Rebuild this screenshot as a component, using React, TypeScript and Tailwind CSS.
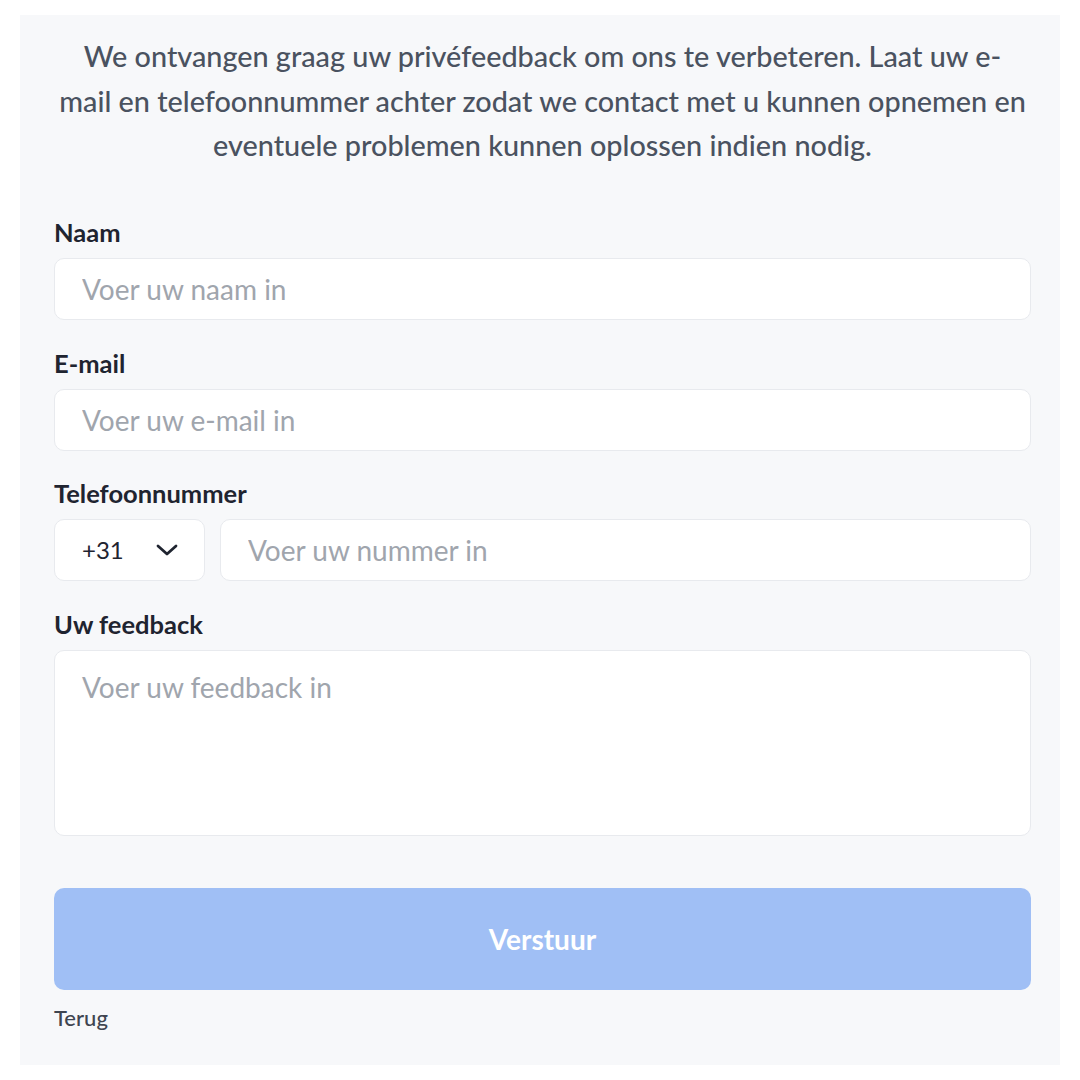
const font = { fontFamily: "Lato, 'Noto Sans', sans-serif" };

function Label({ children }: { children: string }) {
  return (
    <label className="mb-[13px] block text-[25.5px] font-bold leading-[26px] text-[#1f2430]">
      {children}
    </label>
  );
}

const field =
  "block h-[62px] w-full rounded-[10px] border border-[#e8eaee] bg-white px-[27px] text-[28px] text-[#1f2430] outline-none placeholder:text-[#a0a5ad]";

export default function App() {
  return (
    <div className="min-h-[1080px] bg-white pt-[15px]" style={font}>
      <div className="mx-[20px] h-[1050px] bg-[#f7f8fa] pl-[34px] pr-[29px] pt-[19px]">
        <p className="text-center text-[28.8px] font-medium leading-[44.5px] text-[#4a5260]">
          We ontvangen graag uw privéfeedback om ons te verbeteren. Laat uw e-
          <br />
          mail en telefoonnummer achter zodat we contact met u kunnen opnemen en
          <br />
          eventuele problemen kunnen oplossen indien nodig.
        </p>

        <form className="mt-[51px]" onSubmit={(e) => e.preventDefault()}>
          <Label>Naam</Label>
          <input className={field} placeholder="Voer uw naam in" />

          <div className="mt-[30px]">
            <Label>E-mail</Label>
            <input className={field} placeholder="Voer uw e-mail in" />
          </div>

          <div className="mt-[29px]">
            <Label>Telefoonnummer</Label>
            <div className="flex gap-[15px]">
              <button
                type="button"
                className="flex h-[62px] w-[151px] shrink-0 items-center justify-between rounded-[10px] border border-[#e8eaee] bg-white pl-[27px] pr-[26px] text-[24px] text-[#1f2430]"
              >
                <span>+31</span>
                <svg width="22" height="12" viewBox="0 0 22 12" fill="none" aria-hidden>
                  <path
                    d="M2 2 L11 10 L20 2"
                    stroke="#1f2430"
                    strokeWidth="2.8"
                    strokeLinecap="round"
                    strokeLinejoin="round"
                  />
                </svg>
              </button>
              <input className={field} placeholder="Voer uw nummer in" />
            </div>
          </div>

          <div className="mt-[30px]">
            <Label>Uw feedback</Label>
            <textarea
              className="block h-[186px] w-full resize-none rounded-[10px] border border-[#e8eaee] bg-white px-[27px] pt-[20px] text-[28px] leading-[32px] text-[#1f2430] outline-none placeholder:text-[#a0a5ad]"
              placeholder="Voer uw feedback in"
            />
          </div>

          <button
            type="submit"
            className="mt-[52px] flex h-[102px] w-full items-center justify-center rounded-[10px] bg-[#a0bff5] text-[28px] font-bold text-white"
          >
            Verstuur
          </button>
        </form>

        <div className="mt-[16px] text-[22px] font-medium leading-[24px] text-[#3f4550]">Terug</div>
      </div>
    </div>
  );
}
